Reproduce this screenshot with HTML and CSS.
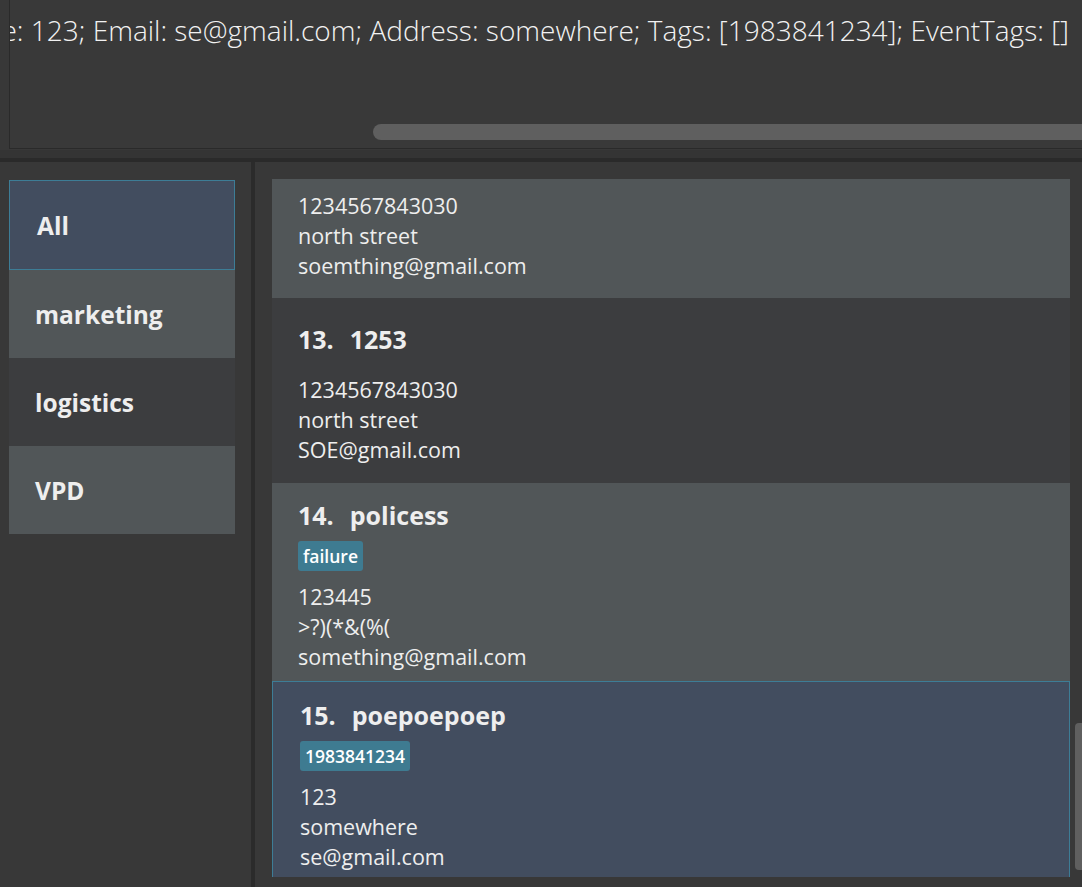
FILE: index.html
```html
<!DOCTYPE html>
<html>
<head>
<meta charset="utf-8">
<link rel="stylesheet" href="styles.css">
</head>
<body>
<div class="result">
  <div class="result-box">
    <div class="result-text"><span>New person added: poepoepoep; Phone: 123; Email: se@gmail.com; Address: somewhere; Tags: [1983841234]; EventTags: []</span></div>
    <div class="hscroll"></div>
  </div>
</div>
<div class="band"></div>
<div class="main">
  <div class="groups">
    <div class="group selected">All</div>
    <div class="group odd">marketing</div>
    <div class="group even">logistics</div>
    <div class="group odd">VPD</div>
  </div>
  <div class="divider"></div>
  <div class="people">
    <div class="viewport">
      <div class="card odd partial">
        <div class="details">
          <div>1234567843030</div>
          <div>north street</div>
          <div>soemthing@gmail.com</div>
        </div>
      </div>
      <div class="card even no-tags">
        <div class="title"><span class="idx">13.</span><span>1253</span></div>
        <div class="details">
          <div>1234567843030</div>
          <div>north street</div>
          <div>SOE@gmail.com</div>
        </div>
      </div>
      <div class="card odd">
        <div class="title"><span class="idx">14.</span><span>policess</span></div>
        <div class="tags"><span class="tag">failure</span></div>
        <div class="details">
          <div>123445</div>
          <div>&gt;?)(*&amp;(%(</div>
          <div>something@gmail.com</div>
        </div>
      </div>
      <div class="card selected">
        <div class="title"><span class="idx">15.</span><span>poepoepoep</span></div>
        <div class="tags"><span class="tag">1983841234</span></div>
        <div class="details">
          <div>123</div>
          <div>somewhere</div>
          <div>se@gmail.com</div>
        </div>
      </div>
    </div>
    <div class="vscroll"></div>
  </div>
</div>
</body>
</html>
```
FILE: styles.css
```css
html, body {
  margin: 0;
  padding: 0;
}
body {
  width: 1082px;
  height: 887px;
  overflow: hidden;
  background: #343434;
  font-family: "Open Sans", "Liberation Sans", sans-serif;
  color: #f1f1f1;
}
.result {
  height: 150px;
  background: #383838;
}
.result-box {
  margin-left: 9px;
  height: 148px;
  border-left: 1px solid #2a2a2a;
  border-bottom: 1px solid #2a2a2a;
  background: #393939;
  display: flex;
  flex-direction: column;
  overflow: hidden;
}
.result-text {
  display: flex;
  justify-content: flex-end;
  padding-right: 13px;
  padding-top: 10px;
  height: 40px;
  font-size: 28px;
  font-weight: 300;
  line-height: 40px;
  white-space: nowrap;
  color: #f2f2f2;
}
.result-text span {
  flex: none;
}
.hscroll {
  margin-top: auto;
  margin-left: 363px;
  margin-bottom: 8px;
  height: 16px;
  background: #5f5f5f;
  border-radius: 8px 0 0 8px;
}
.band {
  height: 8px;
  background: #343434;
  border-bottom: 4px solid #2a2a2a;
}
.main {
  display: grid;
  grid-template-columns: 251px 4px 1fr;
  height: 725px;
}
.groups {
  background: #383838;
  padding: 18px 0 0 9px;
}
.group {
  width: 226px;
  height: 88px;
  box-sizing: border-box;
  padding-left: 26px;
  display: flex;
  align-items: center;
  font-size: 24.5px;
  font-weight: 700;
  color: #eeeeee;
}
.group.selected {
  height: 90px;
  background: #424d5f;
  border: 1px solid #3d7d96;
  padding-left: 27px;
}
.group.odd { background: #515658; }
.group.even { background: #3c3d3f; }
.divider {
  background: #2b2b2b;
}
.people {
  position: relative;
  background: #383838;
  padding: 17px 12px 10px 17px;
  overflow: hidden;
}
.viewport {
  height: 698px;
  overflow: hidden;
}
.card {
  padding: 12px 20px 9px 26px;
}
.card.odd { background: #515658; }
.card.even { background: #3c3d3f; }
.card.selected {
  background: #424d5f;
  border: 1px solid #3d7d96;
  padding: 13px 20px 9px 27px;
}
.card.partial {
  padding-top: 12px;
  padding-bottom: 17px;
}
.card.no-tags {
  padding-top: 21px;
  padding-bottom: 18px;
}
.card.no-tags .title {
  margin-bottom: 16px;
}
.title {
  height: 40px;
  display: flex;
  align-items: center;
  gap: 16px;
  font-size: 25px;
  font-weight: 700;
  color: #eeeeee;
}
.tags {
  display: flex;
  margin-top: 6px;
  margin-bottom: 11px;
}
.tag {
  background: #3e7b91;
  color: #ffffff;
  font-size: 17.5px;
  font-weight: 600;
  line-height: 30px;
  height: 30px;
  padding: 0 5px;
  border-radius: 3px;
}
.details {
  font-size: 21.5px;
  line-height: 30px;
  color: #eeeeee;
}
.vscroll {
  position: absolute;
  left: 820px;
  top: 561px;
  width: 7px;
  height: 147px;
  background: #5f5f5f;
  border-radius: 4px 0 0 4px;
}
```
